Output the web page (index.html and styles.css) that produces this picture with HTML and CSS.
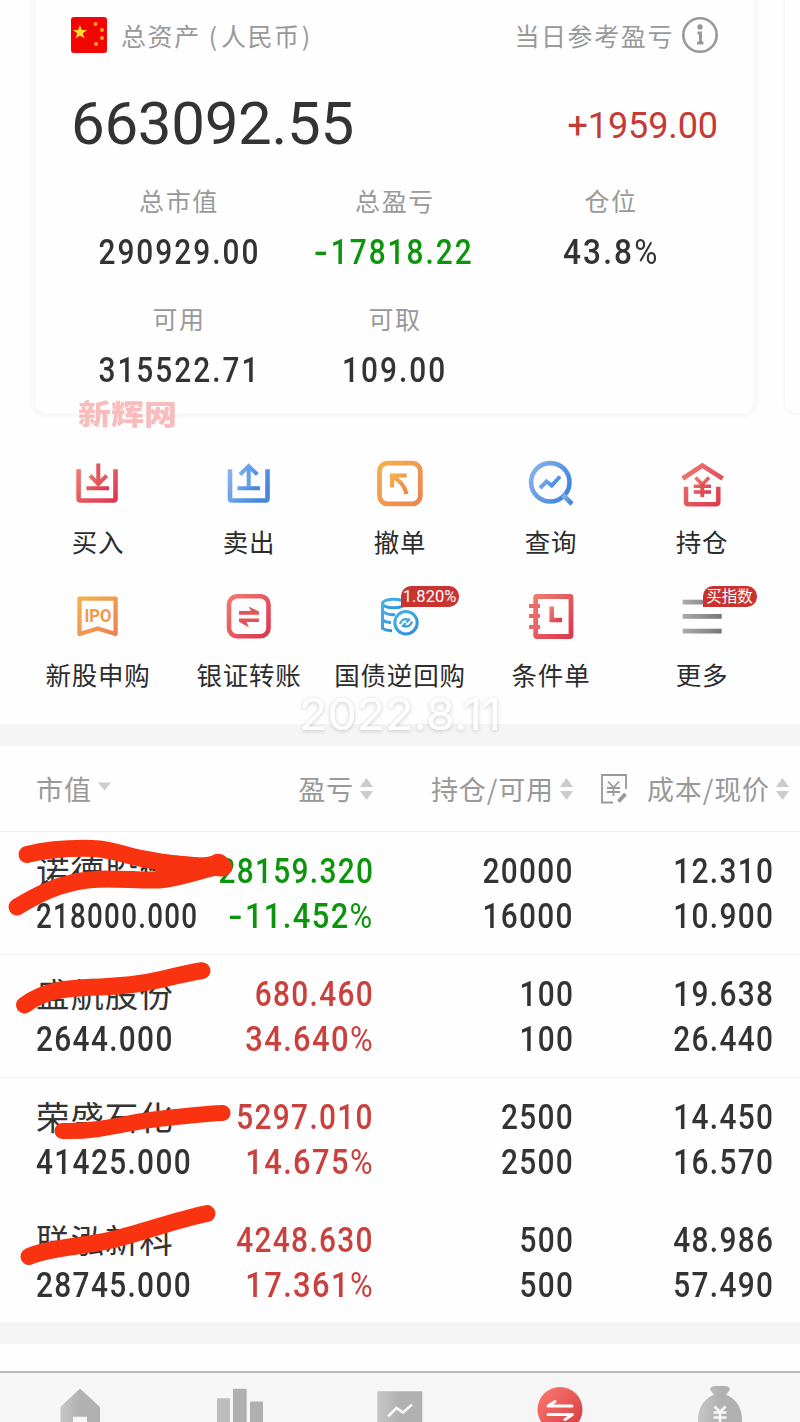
FILE: index.html
```html
<!DOCTYPE html>
<html lang="zh-CN">
<head>
<meta charset="utf-8">
<title>持仓</title>
<link rel="stylesheet" href="styles.css">
</head>
<body>
<svg class="defs" width="0" height="0" aria-hidden="true">
  <defs>
    <linearGradient id="red" x1="0" y1="0" x2="1" y2="1"><stop offset="0" stop-color="#ee7a6e"/><stop offset="1" stop-color="#dc3850"/></linearGradient>
    <linearGradient id="blue" x1="0" y1="0" x2="1" y2="0.6"><stop offset="0" stop-color="#8ab4ee"/><stop offset="1" stop-color="#4487dc"/></linearGradient>
    <linearGradient id="orange" x1="0" y1="0" x2="1" y2="1"><stop offset="0" stop-color="#f2b04c"/><stop offset="1" stop-color="#ee8350"/></linearGradient>
    <linearGradient id="cyan" x1="0" y1="0" x2="1" y2="1"><stop offset="0" stop-color="#45b4e8"/><stop offset="1" stop-color="#2a8fdc"/></linearGradient>
    <linearGradient id="gray" x1="0" y1="0" x2="1" y2="0"><stop offset="0" stop-color="#aaa"/><stop offset="1" stop-color="#777"/></linearGradient>
    <linearGradient id="tab" x1="0" y1="0" x2="1" y2="0"><stop offset="0" stop-color="#c6c6c6"/><stop offset=".5" stop-color="#b1b1b1"/></linearGradient>
    <linearGradient id="tabred" x1="0" y1="0" x2="1" y2="1"><stop offset="0" stop-color="#ff7a72"/><stop offset="1" stop-color="#d4383c"/></linearGradient>
  </defs>
</svg>
<div class="page">
  <div class="cards">
    <section class="card">
      <div class="card-head">
        <svg class="flag" viewBox="0 0 36 36"><rect width="36" height="36" rx="3" fill="#f40404"/><path fill="#fddc35" d="M9 8l1.800 5 5.200.100-4.200 3.200 1.600 5.200L9 18.500l-4.400 3 1.600-5.200-4.200-3.200 5.200-.100z"/><g fill="#f3a32a"><circle cx="24.500" cy="7" r="2"/><circle cx="31" cy="13" r="2"/><circle cx="31" cy="21" r="2"/><circle cx="25" cy="27" r="2"/></g></svg>
        <span class="label">总资产<span class="paren-l">(</span>人民币<span class="paren-r">)</span></span>
        <span class="label today">当日参考盈亏</span>
        <svg class="info" viewBox="0 0 38 38" fill="none" stroke="#999"><circle cx="19" cy="19" r="16.700" stroke-width="2.600"/><circle cx="19" cy="11" r="2.700" fill="#999" stroke="none"/><path d="M16.500 17h3v9M16 27h6.500" stroke-width="3"/></svg>
      </div>
      <div class="total"><span class="total-num">663092.55</span><span class="total-day">+1959.00</span></div>
      <div class="stats">
        <div class="stat"><span class="label">总市值</span><b class="num">290929.00</b></div>
        <div class="stat"><span class="label">总盈亏</span><b class="num green"><u>-</u>17818.22</b></div>
        <div class="stat"><span class="label">仓位</span><b class="num wide">43.8<i>%</i></b></div>
        <div class="stat"><span class="label">可用</span><b class="num">315522.71</b></div>
        <div class="stat"><span class="label">可取</span><b class="num">109.00</b></div>
      </div>
      <span class="site-mark">新辉网</span>
    </section>
    <section class="card next"></section>
  </div>

  <nav class="menu">
    <a class="item"><svg viewBox="74 460 48 48" fill="none" stroke="url(#red)" stroke-width="4.600"><path d="M78.600 469.300V498.500q0 2 2 2H113.500q2 0 2-2V469.300"/><path d="M90 475.500L98.300 484L106.700 475.500M86.500 488.300H109" stroke-width="4"/><path d="M98.300 463.500V484.500" stroke="#e2555a" stroke-width="4"/></svg><span>买入</span></a>
    <a class="item"><svg viewBox="225 460 48 48" fill="none" stroke="url(#blue)" stroke-width="4.600"><path d="M230 469.300V498.500q0 2 2 2H265.500q2 0 2-2V469.300"/><path d="M240 474.500L248.700 466L257.300 474.500M237.500 488.300H260" stroke-width="4"/><path d="M248.700 467V488" stroke="#659fe7" stroke-width="4"/></svg><span>卖出</span></a>
    <a class="item"><svg viewBox="376 460 48 48" fill="none" stroke="url(#orange)" stroke-width="4.800"><rect x="379.500" y="463.200" width="40.800" height="40.600" rx="8"/><path d="M406.700 475.500H392V487.500M394 477.500Q404 483 406.500 494" stroke-width="4.200"/></svg><span>撤单</span></a>
    <a class="item"><svg viewBox="527 460 48 48" fill="none" stroke="url(#blue)" stroke-width="4.600"><circle cx="550.300" cy="482.300" r="19.200"/><path d="M563 495L572 504"/><path d="M540 488L546.500 481.500L551.700 485.500L560 476.500" stroke-width="4"/></svg><span>查询</span></a>
    <a class="item"><svg viewBox="678 460 48 48" fill="none" stroke="url(#red)" stroke-width="4.500"><path d="M682.700 478.500L702.300 465.500L722.700 478.500M686 486.700V502q0 2.200 2.200 2.200H716q2.300 0 2.300-2.200V486.700"/><path d="M695.500 477.500L702.300 484.500L709 477.500M693.700 486.300H711M693.700 492H711" stroke-width="3.600"/><path d="M702.300 484V497" stroke="#df4c54" stroke-width="3.800"/></svg><span>持仓</span></a>
    <a class="item"><svg viewBox="74 593 48 48" fill="none" stroke="url(#orange)" stroke-width="4.300"><path d="M79.500 598.700H115.600V634L97.700 628.500L79.500 634Z" stroke-linejoin="round"/><text class="ipo" x="84.500" y="622" textLength="27" lengthAdjust="spacingAndGlyphs">IPO</text></svg><span>新股申购</span></a>
    <a class="item"><svg viewBox="225 593 48 48" fill="none" stroke="url(#red)" stroke-width="4.600"><rect x="229" y="596.300" width="39.500" height="40" rx="8"/><path fill="#e2565a" stroke="none" d="M239 611H251L248.500 606.500L259 611.500V614.800H239zM259 618.400H239V621.700L249 627.500L246.500 622H259z"/></svg><span>银证转账</span></a>
    <a class="item"><svg viewBox="376 593 48 48" fill="none" stroke="url(#cyan)" stroke-width="3"><ellipse cx="393.700" cy="603.500" rx="11.200" ry="4.300"/><path d="M382.500 603V628.500Q386 630.500 392 630.800M382.500 611Q387 615.500 395 614.500M382.500 620Q386 622.800 391 622.500"/><circle cx="406" cy="622.700" r="11.200"/><path d="M400 624Q402 617.500 409 619.500L406.500 622.500M412 621.500Q410 628 403 626L405.500 623" stroke-width="2.200"/></svg><span>国债逆回购</span><em class="badge rate">1.820%</em></a>
    <a class="item"><svg viewBox="527 593 48 48" fill="none" stroke="url(#red)" stroke-width="4.800"><rect x="535.700" y="596.500" width="35.300" height="40" rx="1"/><path d="M551.700 606.500V620H562" stroke-width="4.500"/><path fill="#e9686a" stroke="none" d="M529 604h11v4h-11zM529 614h11v4h-11zM529 625h11v4h-11z"/></svg><span>条件单</span></a>
    <a class="item"><svg viewBox="678 593 48 48" fill="url(#gray)"><rect x="682.700" y="599.700" width="39" height="4.800"/><rect x="682.700" y="614" width="39" height="4.800"/><rect x="682.700" y="628.700" width="39" height="4.800"/></svg><span>更多</span><em class="badge tip">买指数</em></a>
  </nav>

  <div class="band"></div>

  <section class="list">
    <header class="thead">
      <span class="th c1">市值<svg class="sort" viewBox="0 0 13 22"><path d="M0 4.500H13L6.500 12.500z"/></svg></span>
      <span class="th">盈亏<svg class="sort" viewBox="0 0 13 22"><path d="M0 9H13L6.500 0zM0 13H13L6.500 22z"/></svg></span>
      <span class="th">持仓/可用<svg class="sort" viewBox="0 0 13 22"><path d="M0 9H13L6.500 0zM0 13H13L6.500 22z"/></svg></span>
      <span class="th c4"><svg class="edit" viewBox="0 0 26 30" fill="none" stroke="#999" stroke-width="1.800"><path d="M25 15V1H1V28.500H12"/><path d="M7 7.500L12.500 13.500L18 7.500M6 14H19M6 18H19M12.500 13.500V22"/><path d="M17.500 27.500L24.500 20" stroke-width="4"/></svg>成本/现价<svg class="sort" viewBox="0 0 13 22"><path d="M0 9H13L6.500 0zM0 13H13L6.500 22z"/></svg></span>
    </header>
    <div class="row">
      <div class="cell c1"><span class="name">诺德股份</span><b class="num tight">218000.000</b></div>
      <div class="cell green"><b class="num"><u>-</u>28159.320</b><b class="num pct"><u>-</u>11.452<i>%</i></b></div>
      <div class="cell"><b class="num">20000</b><b class="num">16000</b></div>
      <div class="cell"><b class="num">12.310</b><b class="num">10.900</b></div>
    </div>
    <div class="row">
      <div class="cell c1"><span class="name">盛航股份</span><b class="num">2644.000</b></div>
      <div class="cell red"><b class="num">680.460</b><b class="num pct">34.640<i>%</i></b></div>
      <div class="cell"><b class="num">100</b><b class="num">100</b></div>
      <div class="cell"><b class="num">19.638</b><b class="num">26.440</b></div>
    </div>
    <div class="row last">
      <div class="cell c1"><span class="name">荣盛石化</span><b class="num">41425.000</b></div>
      <div class="cell red"><b class="num">5297.010</b><b class="num pct">14.675<i>%</i></b></div>
      <div class="cell"><b class="num">2500</b><b class="num">2500</b></div>
      <div class="cell"><b class="num">14.450</b><b class="num">16.570</b></div>
    </div>
    <div class="row last">
      <div class="cell c1"><span class="name">联泓新科</span><b class="num">28745.000</b></div>
      <div class="cell red"><b class="num">4248.630</b><b class="num pct">17.361<i>%</i></b></div>
      <div class="cell"><b class="num">500</b><b class="num">500</b></div>
      <div class="cell"><b class="num">48.986</b><b class="num">57.490</b></div>
    </div>
    <svg class="marker" viewBox="0 831 240 491" fill="none" stroke="#f9330f" stroke-width="17" stroke-linecap="round" stroke-linejoin="round">
      <path d="M27 854.500C50 849 75 848 93 848.500C115 849.500 128 857 150 860C170 864 195 867 219 866"/>
      <path d="M17 907C35 896 50 888 68 884C95 875 130 881 158 880C175 879 195 872 219 866"/>
      <path fill="#f9330f" stroke="none" d="M150 853L200 857.500Q211 857 214 854.500Q221 852 227 857.500Q236 867 230 873Q225 878.500 214 875.500L205 876L160 887z"/>
      <path d="M24.500 1005C45 990 65 988 100 987C150 985 160 978 202 970.700"/>
      <path d="M62.500 1131C100 1132 125 1123 150 1120C175 1117 200 1114 222.500 1113" stroke-width="16"/>
      <path d="M29 1256.500C50 1247 90 1246 115 1239C145 1232 175 1220 207 1213.500"/>
    </svg>
  </section>

  <div class="band"></div>
  <div class="gap"></div>

  <footer class="tabs">
    <svg viewBox="50 1380 60 42"><path fill="url(#tab)" d="M79 1389.500q1-1 2 0L100 1407V1422H87V1416.700H73V1422H60.500V1407z"/></svg>
    <svg viewBox="210 1380 60 42"><rect x="217" y="1398.300" width="13" height="30" rx="1" fill="#bebebe"/><rect x="233" y="1388.700" width="13.700" height="40" rx="1" fill="#b0b0b0"/><rect x="250" y="1401.500" width="13" height="30" rx="1" fill="#b0b0b0"/></svg>
    <svg viewBox="370 1380 60 42"><rect x="377.300" y="1391.300" width="45" height="40" rx="1" fill="url(#tab)"/><path d="M388 1416.500L396.500 1408L403 1412.500L412 1404.500" fill="none" stroke="#f6f6f6" stroke-width="2.600"/></svg>
    <svg viewBox="530 1380 60 42"><circle cx="560" cy="1409.500" r="22.500" fill="url(#tabred)"/><g fill="none" stroke="#fff" stroke-width="3" stroke-linecap="round" stroke-linejoin="round"><path d="M555 1401.500L548 1406H572"/><path d="M548 1414.500H572.500L565 1419.500"/></g></svg>
    <svg viewBox="690 1380 60 42"><path fill="url(#tab)" d="M714 1386H726Q731 1387 729.500 1390.500L726 1394.500Q742 1402 742 1420V1424H698V1420Q698 1402 714 1394.500L710.500 1390.500Q709 1387 714 1386z"/><path d="M714.500 1406.500L720 1412L725.500 1406.500M713.500 1412.500H726.500M713.500 1417.500H726.500M720 1412V1422" fill="none" stroke="#f6f6f6" stroke-width="2.600"/></svg>
  </footer>

  <svg class="date-mark" viewBox="0 0 210 48"><text x="3" y="38" textLength="202" lengthAdjust="spacingAndGlyphs">2022.8.11</text></svg>
</div>
</body>
</html>
```
FILE: styles.css
```css
* { box-sizing: border-box; }
body {
  margin: 0;
  background: #fefefe;
  color: #333;
  font-family: Roboto, "Noto Sans CJK SC", sans-serif;
}
.defs { position: absolute; }
.page {
  position: relative;
  width: 800px;
  height: 1422px;
  overflow: hidden;
}

/* asset cards */
.cards {
  display: flex;
  gap: 32px;
  height: 446px;
  padding-left: 36px;
}
.card {
  position: relative;
  flex: none;
  width: 717px;
  height: 413px;
  padding: 15px 35px 0;
  border-radius: 0 0 10px 10px;
  background: #fefefe;
  box-shadow: 0 0 2px 5px #f9f9f9;
}
.card.next { box-shadow: 0 0 2px 1px #f3f3f3; }
.card-head {
  display: flex;
  align-items: center;
  height: 42px;
  padding-bottom: 2px;
}
.flag { width: 36px; height: 36px; margin-right: 14px; }
.info { width: 38px; height: 38px; margin: 0 -1px 0 7px; }
.label {
  color: #999;
  font: 25px/36px "Noto Sans CJK SC", sans-serif;
  letter-spacing: 1.6px;
  white-space: nowrap;
}
.paren-l { margin: 0 2px 0 8px; }
.paren-r { margin-left: 1px; }
.today { margin-left: auto; }
.total {
  display: flex;
  justify-content: space-between;
  height: 122px;
  padding-top: 32px;
}
.total-num { font-size: 60px; line-height: 70px; letter-spacing: -.3px; }
.total-day { color: #c43a34; font-size: 36px; line-height: 74px; letter-spacing: -.1px; }
.stats {
  display: grid;
  grid-template-columns: repeat(3, 216px);
  grid-auto-rows: 118px;
}
.stat {
  display: flex;
  flex-direction: column;
  align-items: center;
  padding-top: 3px;
}
.num {
  display: block;
  font: 500 35.500px/44px Roboto, sans-serif;
  letter-spacing: 1.600px;
  transform: scaleX(.84);
  transform-origin: right;
  white-space: nowrap;
}
.num i { font-style: normal; font-weight: 400; }
.num u { display: inline-block; text-decoration: none; transform: scaleX(1.35); margin-right: 3px; }
.stat .num {
  margin-top: 12px;
  letter-spacing: 2.400px;
  transform-origin: center;
}
.stat .wide { transform: scaleX(.89); }
.green { color: #0c950c; }
.red { color: #c9403d; }
.site-mark {
  position: absolute;
  left: 42px;
  top: 393px;
  color: #f9bcbc;
  font: 900 33px/40px "Noto Sans CJK SC", sans-serif;
  transform: scaleY(.86);
}

/* shortcuts */
.menu {
  display: grid;
  grid-template-columns: repeat(5, 151px);
  grid-auto-rows: 133px;
  justify-content: center;
  height: 278px;
  padding-top: 14px;
}
.item {
  position: relative;
  display: flex;
  flex-direction: column;
  align-items: center;
}
.item svg { width: 48px; height: 48px; }
.item span {
  margin-top: 15px;
  color: #2c2c2c;
  font: 25.500px/36px "Noto Sans CJK SC", sans-serif;
  letter-spacing: .8px;
  white-space: nowrap;
}
.ipo {
  fill: #f0994d;
  stroke: none;
  font: 700 18.500px Roboto, sans-serif;
}
.badge {
  position: absolute;
  top: -7px;
  left: 76px;
  height: 21px;
  border-radius: 10px 10px 10px 0;
  background: #c83430;
  color: #fff;
  font: 16.500px/22px Roboto, "Noto Sans CJK SC", sans-serif;
  text-align: center;
  white-space: nowrap;
}
.rate { width: 58px; }
.tip { width: 54px; font-size: 15.500px; }

.band { height: 22px; background: #f5f5f5; }

/* holdings */
.list { position: relative; height: 576px; }
.thead, .row {
  display: grid;
  grid-template-columns: 190px 148px 200px 200px;
  padding-left: 36px;
}
.thead {
  height: 86px;
  border-bottom: 1px solid #ededed;
}
.th {
  display: flex;
  align-items: center;
  justify-content: flex-end;
  padding: 1px 1px 0 0;
  color: #999;
  font: 27px/36px "Noto Sans CJK SC", sans-serif;
  letter-spacing: .9px;
  white-space: nowrap;
}
.th.c1 { justify-content: flex-start; }
.th.c4 { margin-right: -16px; }
.sort { width: 13px; height: 22px; margin-left: 6px; fill: #ccc; }
.edit { width: 26px; height: 30px; margin-right: 20px; }
.row {
  height: 123px;
  border-bottom: 1px solid #f2f2f2;
}
.row.last { border-color: transparent; }
.cell {
  display: flex;
  flex-direction: column;
  align-items: flex-end;
  padding-top: 16px;
}
.cell .num { height: 44.500px; line-height: 46px; }
.cell .pct { transform: scaleX(.87); }
.cell.c1 { align-items: flex-start; }
.c1 .num { transform-origin: left; }
.cell .tight { transform: scaleX(.782); }
.name {
  height: 44.500px;
  font: 33.500px/44px "Noto Sans CJK SC", sans-serif;
  letter-spacing: .9px;
}
.marker {
  position: absolute;
  left: 0;
  top: 85px;
  width: 240px;
  height: 491px;
}

.gap { height: 27px; }
.tabs {
  display: grid;
  grid-template-columns: repeat(5, 160px);
  justify-items: center;
  height: 51px;
  padding-top: 7px;
  border-top: 2px solid #bbb;
  background: #f6f6f6;
}
.tabs svg { width: 60px; height: 42px; }

.date-mark {
  position: absolute;
  left: 296px;
  top: 692px;
  width: 210px;
  height: 48px;
  overflow: visible;
  filter: drop-shadow(0 1px 2px rgba(0, 0, 0, .2));
}
.date-mark text {
  fill: #fff;
  font: 400 44px Inter, sans-serif;
}
```
